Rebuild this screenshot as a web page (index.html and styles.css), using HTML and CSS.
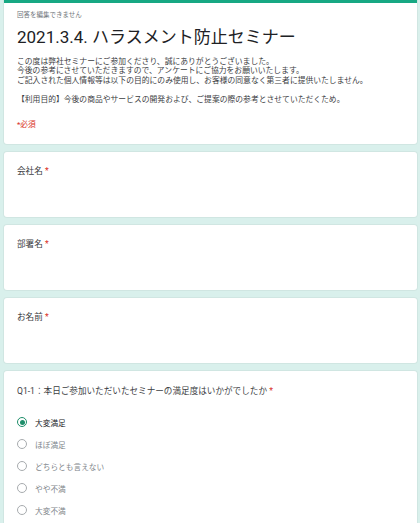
FILE: index.html
```html
<!DOCTYPE HTML>
<html>
    <head>
        <meta charset="utf-8">
        <title>2021.3.4. ハラスメント防止セミナー</title>
        <link rel="stylesheet" href="styles.css">
    </head>
    <body>
        <div class="form">
            <!-- header card -->
            <div class="card head">
                <div class="note">回答を編集できません</div>
                <h1 class="title">2021.3.4. ハラスメント防止セミナー</h1>
                <p class="desc">この度は弊社セミナーにご参加くださり、誠にありがとうございました。<br>今後の参考にさせていただきますので、アンケートにご協力をお願いいたします。<br>ご記入された個人情報等は以下の目的にのみ使用し、お客様の同意なく第三者に提供いたしません。<br><br>【利用目的】今後の商品やサービスの開発および、ご提案の際の参考とさせていただくため。</p>
                <div class="req">*必須</div>
            </div>

            <div class="card item">
                <div class="label">会社名 <span class="star">*</span></div>
            </div>
            <div class="card item">
                <div class="label">部署名 <span class="star">*</span></div>
            </div>
            <div class="card item">
                <div class="label">お名前 <span class="star">*</span></div>
            </div>

            <!-- question -->
            <div class="card item">
                <div class="label">Q1-1：本日ご参加いただいたセミナーの満足度はいかがでしたか <span class="star">*</span></div>
                <div class="options">
                    <div class="opt on"><span class="radio"></span>大変満足</div>
                    <div class="opt"><span class="radio"></span>ほぼ満足</div>
                    <div class="opt"><span class="radio"></span>どちらとも言えない</div>
                    <div class="opt"><span class="radio"></span>やや不満</div>
                    <div class="opt"><span class="radio"></span>大変不満</div>
                </div>
            </div>
        </div>
    </body>
</html>
```

FILE: styles.css
```css
body {
    margin: 0;
    background-color: #d9f0ec;
    font-family: Roboto, "Noto Sans CJK JP", sans-serif;
    color: #202124;
}
.form {
    display: flex;
    flex-direction: column;
    gap: 8px;
    padding: 0 3px 0 4px;
}
.card {
    background-color: #fff;
    border-radius: 3px;
    box-shadow: 0 0 0 1px rgba(0, 0, 0, 0.04);
    padding: 0 13px;
}
.head {
    border-top: 3px solid #17a883;
    border-radius: 0 0 3px 3px;
    padding-top: 6px;
    padding-bottom: 14px;
}
.note {
    font-size: 6.5px;
    line-height: 12px;
    color: #70757a;
}
.title {
    margin: 4px 0 0;
    font-size: 17px;
    line-height: 24px;
    font-weight: normal;
}
.desc {
    margin: 8px 0 0;
    font-size: 7.8px;
    line-height: 9.4px;
    color: #3c4043;
}
.req {
    margin-top: 16px;
    font-size: 7.7px;
    line-height: 10px;
    color: #d93025;
}
.item {
    min-height: 65px;
    box-sizing: border-box;
    padding-top: 14px;
}
.item:last-child {
    padding-top: 15px;
    padding-bottom: 10px;
}
.label {
    font-size: 8.6px;
    line-height: 10px;
    color: #3c4043;
}
.star {
    color: #d93025;
}
.options {
    margin-top: 15px;
}
.opt {
    display: flex;
    align-items: center;
    gap: 8px;
    height: 22px;
    font-size: 7.7px;
    color: #80868b;
}
.radio {
    width: 10px;
    height: 10px;
    box-sizing: border-box;
    border: 1.3px solid #a7abae;
    border-radius: 50%;
    display: flex;
    align-items: center;
    justify-content: center;
}
.opt.on {
    color: #202124;
}
.opt.on .radio {
    border-color: #1e8e6a;
}
.opt.on .radio::after {
    content: "";
    width: 5px;
    height: 5px;
    border-radius: 50%;
    background-color: #1e8e6a;
}
```
